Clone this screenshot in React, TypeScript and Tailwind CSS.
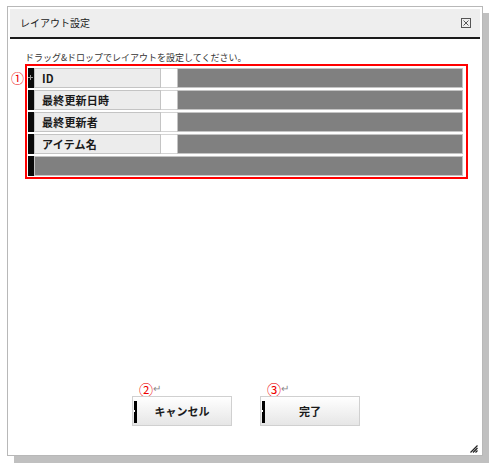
import React from "react";

const font = "font-['Noto_Sans_CJK_JP','Noto_Sans',sans-serif]";

function Row({ label, plus }: { label?: string; plus?: boolean }) {
  return (
    <div className="flex h-[20px]">
      <div className="relative w-[6px] bg-[#0a0a0a]">
        {plus && (
          <svg className="absolute left-[0px] top-[7px]" width="5" height="5" viewBox="0 0 5 5">
            <path d="M2.5 0V5M0 2.5H5" stroke="#9a9a9a" strokeWidth="1" />
          </svg>
        )}
      </div>
      {label !== undefined ? (
        <>
          <div className="flex w-[127px] items-center border border-[#c4c4c4] bg-[#ececec] pl-[7px] text-[11px] font-bold tracking-[0.2px] text-[#1a1a1a]">
            {label}
          </div>
          <div className="w-[16px] border-y border-[#d4d4d4] bg-white" />
          <div className="flex-1 border border-[#c4c4c4] bg-[#808080]" />
        </>
      ) : (
        <div className="flex-1 border border-[#c4c4c4] bg-[#808080]" />
      )}
    </div>
  );
}

function Btn({ num, text }: { num: string; text: string }) {
  return (
    <div className="flex flex-col">
      <div className="flex h-[12px] items-end pl-[7px] leading-none">
        <span className="text-[14px] leading-none text-[#ee0000]">{num}</span>
        <span className="mb-[3px] text-[10px] leading-none text-[#888]">↵</span>
      </div>
      <div className="relative flex h-[30px] w-[100px] items-center justify-center border border-[#d0d0d0] bg-gradient-to-b from-white to-[#e6e6e6] text-[11px] font-bold text-[#1a1a1a]">
        <div className="absolute left-[1px] top-[4px] h-[22px] w-[3px] bg-black">
          <div className="absolute left-0 top-[9px] h-[2px] w-[1px] bg-white" />
        </div>
        {text}
      </div>
    </div>
  );
}

export default function App() {
  return (
    <div className={`h-[464px] w-[489px] bg-white pl-[7px] pt-[6px] ${font}`}>
      <div className="relative flex h-[450px] w-[476px] flex-col border border-[#b8b8b8] bg-white p-[2px] shadow-[7px_7px_0_#c0c0c0]">
        <div className="flex h-[28px] items-center justify-between bg-[#eeeeee] pl-[10px] pr-[9px]">
          <span className="text-[10px] leading-none text-[#222]">レイアウト設定</span>
          <svg width="10" height="10" viewBox="0 0 10 10">
            <rect x="0.5" y="0.5" width="9" height="9" fill="none" stroke="#555" strokeWidth="1" />
            <path d="M2.5 2.5L7.5 7.5M7.5 2.5L2.5 7.5" stroke="#555" strokeWidth="1" />
          </svg>
        </div>
        <div className="h-[2px] bg-[#1a1a1a]" />
        <div className="pl-[15px] pt-[13px] text-[9px] leading-[12px] text-[#333]">
          ドラッグ&amp;ドロップでレイアウトを設定してください。
        </div>
        <div className="flex">
          <div className="w-[15px] pl-[1px] pt-[7px] text-[13px] leading-none text-[#ee0000]">①</div>
          <div className="w-[443px] border-2 border-[#ff0000] pb-[1px] pl-[1px] pr-[3px] pt-[2px]">
            <div className="flex flex-col gap-[2px]">
              <Row label="ID" plus />
              <Row label="最終更新日時" />
              <Row label="最終更新者" />
              <Row label="アイテム名" />
              <Row />
            </div>
          </div>
        </div>
        <div className="flex-1" />
        <div className="flex justify-center gap-[28px] pb-[27px] pl-[2px]">
          <Btn num="②" text="キャンセル" />
          <Btn num="③" text="完了" />
        </div>
        <svg className="absolute bottom-[2px] right-[4px]" width="8" height="8" viewBox="0 0 8 8">
          <path d="M0.5 7.5L7.5 0.5M3 7.5L7.5 3M5.5 7.5L7.5 5.5" stroke="#222" strokeWidth="1.2" />
        </svg>
      </div>
    </div>
  );
}
